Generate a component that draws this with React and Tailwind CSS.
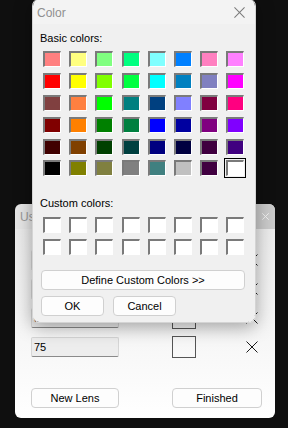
import React from "react";

const basic = [
  ["#ff8080", "#ffff80", "#80ff80", "#00ff80", "#80ffff", "#0080ff", "#ff80c0", "#ff80ff"],
  ["#ff0000", "#ffff00", "#80ff00", "#00ff40", "#00ffff", "#0080c0", "#8080c0", "#ff00ff"],
  ["#804040", "#ff8040", "#00ff00", "#008080", "#004080", "#8080ff", "#800040", "#ff0080"],
  ["#800000", "#ff8000", "#008000", "#008040", "#0000ff", "#0000a0", "#800080", "#8000ff"],
  ["#400000", "#804000", "#004000", "#004040", "#000080", "#000040", "#400040", "#400080"],
  ["#000000", "#808000", "#808040", "#808080", "#408080", "#c0c0c0", "#400040", "#ffffff"],
];

function Swatch({ color, selected }) {
  return (
    <div
      className={`w-[18px] h-[16px] border-t-2 border-l-2 border-r border-b border-t-[#7a7a7a] border-l-[#7a7a7a] border-r-white border-b-white ${
        selected ? "outline outline-1 outline-black outline-offset-1" : ""
      }`}
      style={{ backgroundColor: color }}
    />
  );
}

function XIcon({ size = 12, color = "#1a1a1a", width = 1 }) {
  return (
    <svg width={size} height={size} viewBox="0 0 12 12">
      <path d="M0.5 0.5 L11.5 11.5 M11.5 0.5 L0.5 11.5" stroke={color} strokeWidth={width} fill="none" />
    </svg>
  );
}

function WinButton({ children, className = "" }) {
  return (
    <div
      className={`h-[20px] flex items-center justify-center rounded-[4px] border border-[#d0d0d0] bg-[#fdfdfd] text-[11px] text-black ${className}`}
    >
      {children}
    </div>
  );
}

function LensRow({ value }) {
  return (
    <div className="flex items-center h-[22px]">
      <div className="w-[88px] h-[20px] bg-[#ededed] border border-[#d6d6d6] border-b-[#8a8a8a] rounded-[2px] flex items-center pl-[2px] text-[11px] text-black">
        {value}
      </div>
      <div className="ml-[53px] w-[24px] h-[22px] border border-[#555555]" />
      <div className="ml-[50px]">
        <XIcon />
      </div>
    </div>
  );
}

export default function App() {
  return (
    <div
      className="relative w-[288px] h-[428px] bg-[#0f0f0f] overflow-hidden"
      style={{ fontFamily: '"Liberation Sans", Arial, sans-serif' }}
    >
      {/* background window */}
      <div className="absolute left-[15px] top-[204px] w-[260px] h-[214px] rounded-[6px] overflow-hidden flex flex-col">
        <div className="h-[25px] shrink-0 bg-[#e6e6e6] flex items-center justify-between">
          <span className="pl-[5px] text-[12px] text-[#9a9a9a]">User Lenses</span>
          <div className="w-[20px] h-full bg-[#cacaca] flex items-center justify-center">
            <XIcon size={7} color="#f4f4f4" width={1.6} />
          </div>
        </div>
        <div className="flex-1 flex flex-col bg-gradient-to-b from-[#ebebeb] to-[#ffffff] pl-[16px] pt-[20px] pb-[10px]">
          <div className="flex flex-col gap-[7px]">
            <LensRow value="100" />
            <LensRow value="90" />
            <LensRow value="85" />
            <LensRow value="75" />
          </div>
          <div className="mt-auto flex items-center">
            <WinButton className="w-[88px]">New Lens</WinButton>
            <WinButton className="ml-[53px] w-[90px]">Finished</WinButton>
          </div>
        </div>
      </div>

      {/* color dialog */}
      <div className="absolute left-[32px] top-[-2px] w-[224px] h-[325px] rounded-[8px] overflow-hidden flex flex-col border border-[#d4d4d4] shadow-[0_4px_18px_rgba(0,0,0,0.35)]">
        <div className="h-[25px] shrink-0 bg-[#f3f3f3] flex items-center justify-between pt-[2px]">
          <span className="pl-[4px] text-[12px] text-[#8f8f8f]">Color</span>
          <div className="pr-[10px]">
            <XIcon size={11} color="#7a7a7a" width={1.1} />
          </div>
        </div>
        <div className="flex-1 bg-[#f0f0f0] pl-[7px] flex flex-col">
          <div className="mt-[8px] h-[13px] leading-[13px] text-[11px] text-black">Basic colors:</div>
          <div className="mt-[6px] ml-[3px] grid grid-cols-[repeat(8,18px)] gap-x-[8.2px] gap-y-[5.9px]">
            {basic.map((row, r) =>
              row.map((c, i) => (
                <Swatch key={`${r}-${i}`} color={c} selected={r === 5 && i === 7} />
              ))
            )}
          </div>
          <div className="mt-[21px] h-[13px] leading-[13px] text-[11px] text-black">Custom colors:</div>
          <div className="mt-[7px] ml-[3px] grid grid-cols-[repeat(8,18px)] gap-x-[8.2px] gap-y-[5.5px]">
            {Array.from({ length: 16 }).map((_, i) => (
              <Swatch key={i} color="#ffffff" />
            ))}
          </div>
          <WinButton className="mt-[15px] ml-[1px] w-[204px]">Define Custom Colors &gt;&gt;</WinButton>
          <div className="mt-[6px] ml-[1px] flex gap-[9px]">
            <WinButton className="w-[63px]">OK</WinButton>
            <WinButton className="w-[63px]">Cancel</WinButton>
          </div>
        </div>
      </div>
    </div>
  );
}
